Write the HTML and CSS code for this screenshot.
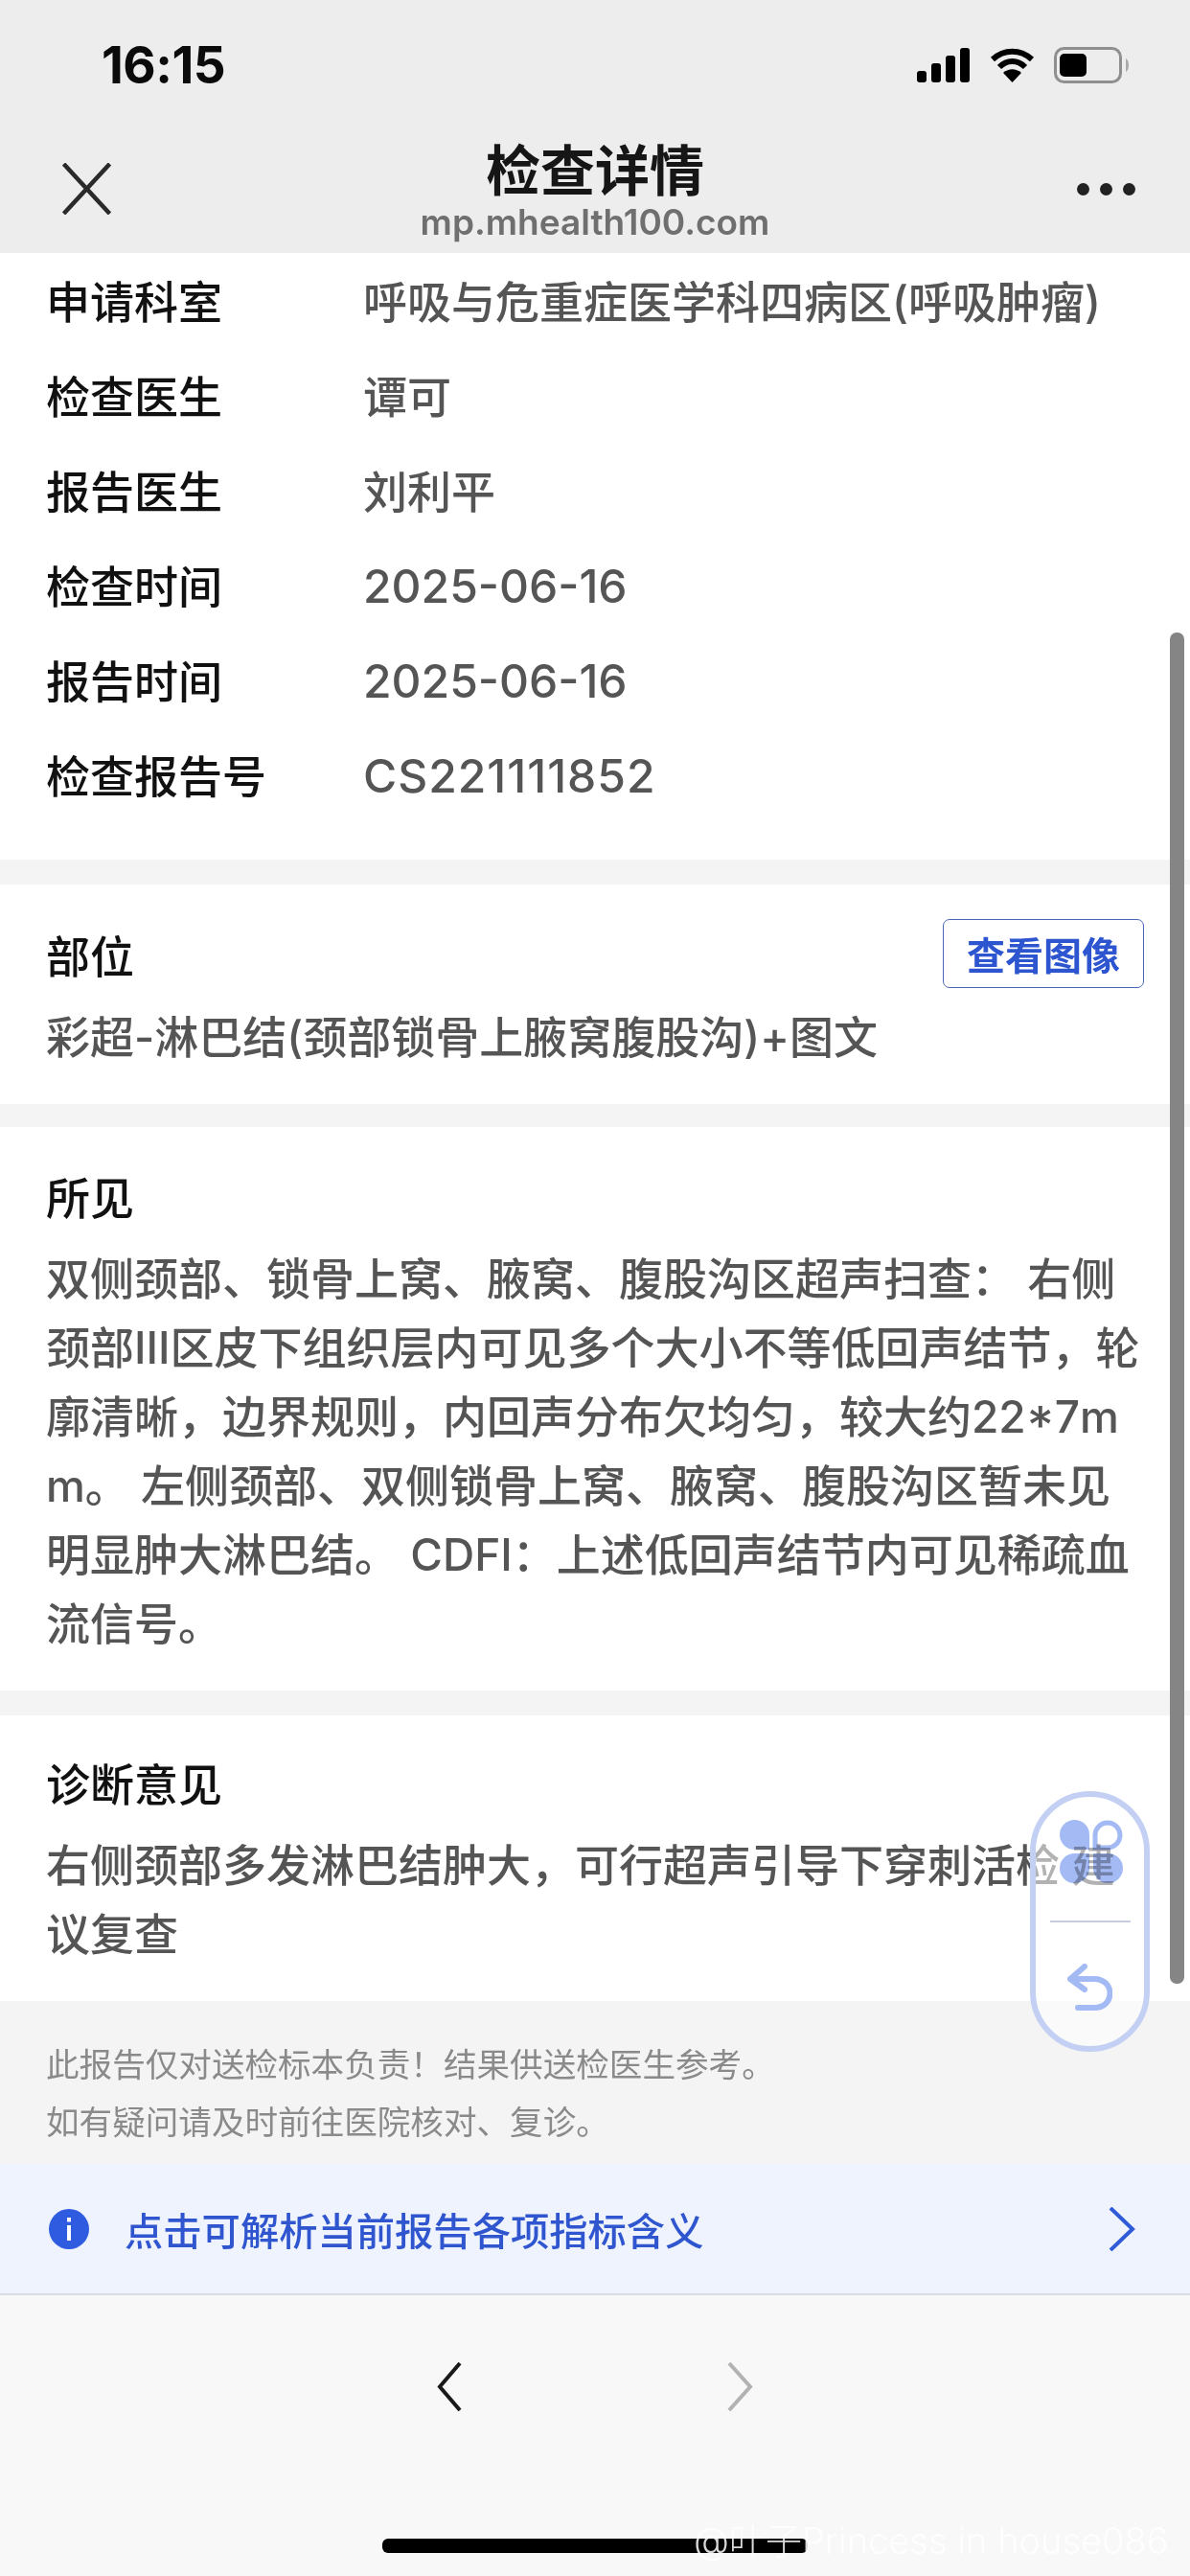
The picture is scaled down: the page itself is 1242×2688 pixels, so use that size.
FILE: index.html
```html
<!DOCTYPE html>
<html lang="zh-CN">
<head>
<meta charset="utf-8">
<title>检查详情</title>
<link rel="stylesheet" href="styles.css">
</head>
<body>
<div class="page">
  <header class="top">
    <div class="status">
      <span class="time">16:15</span>
      <div class="status-icons">
        <svg class="signal" width="56" height="36" viewBox="0 0 56 36"><rect x="0" y="24" width="10" height="12" rx="3"/><rect x="15" y="16" width="10" height="20" rx="3"/><rect x="30" y="8" width="10" height="28" rx="3"/><rect x="45" y="0" width="10" height="36" rx="3"/></svg>
        <svg class="wifi" width="47" height="36" viewBox="0 0 47 36"><path d="M3 12 C15 1 32 1 44 12" fill="none" stroke="#000" stroke-width="6"/><path d="M10 20 C18 12 29 12 37 20" fill="none" stroke="#000" stroke-width="6"/><path d="M23.5 36 L14 26 C20 21 27 21 33 26 Z"/></svg>
        <svg class="battery" width="79" height="38" viewBox="0 0 79 38"><rect x="1.5" y="1.5" width="68" height="35" rx="9" fill="none" stroke="#8f8f8f" stroke-width="3"/><rect x="6" y="7" width="28" height="24" rx="5" fill="#000"/><path d="M75 12 C79 14 79 24 75 26 Z" fill="#aaa"/></svg>
      </div>
    </div>
    <div class="nav">
      <svg class="close" width="51" height="54" viewBox="0 0 51 54"><path d="M1.5 1 L49.5 53 M49.5 1 L1.5 53" fill="none" stroke="#2a2a2a" stroke-width="4.5"/></svg>
      <div class="titles">
        <div class="title">检查详情</div>
        <div class="domain">mp.mhealth100.com</div>
      </div>
      <div class="dots"><i></i><i></i><i></i></div>
    </div>
  </header>

  <main class="content">
    <section class="card info">
      <div class="row"><span class="label">申请科室</span><span class="value value-cjk">呼吸与危重症医学科四病区(呼吸肿瘤)</span></div>
      <div class="row"><span class="label">检查医生</span><span class="value value-cjk">谭可</span></div>
      <div class="row"><span class="label">报告医生</span><span class="value value-cjk">刘利平</span></div>
      <div class="row"><span class="label">检查时间</span><span class="value value-latin">2025-06-16</span></div>
      <div class="row"><span class="label">报告时间</span><span class="value value-latin">2025-06-16</span></div>
      <div class="row"><span class="label">检查报告号</span><span class="value value-latin value-code">CS221111852</span></div>
    </section>

    <section class="card part">
      <div class="part-head"><h2 class="heading">部位</h2><span class="view-btn">查看图像</span></div>
      <p class="text">彩超-淋巴结(颈部锁骨上腋窝腹股沟)+图文</p>
    </section>

    <section class="card finding">
      <h2 class="heading">所见</h2>
      <p class="text">双侧颈部、锁骨上窝、腋窝、腹股沟区超声扫查： 右侧颈部III区皮下组织层内可见多个大小不等低回声结节，轮廓清晰，边界规则，内回声分布欠均匀，较大约22*7mm。 左侧颈部、双侧锁骨上窝、腋窝、腹股沟区暂未见明显肿大淋巴结。 CDFI：上述低回声结节内可见稀疏血流信号。</p>
    </section>

    <section class="card diagnosis">
      <h2 class="heading">诊断意见</h2>
      <p class="text">右侧颈部多发淋巴结肿大，可行超声引导下穿刺活检 建议复查</p>
    </section>

    <div class="notice">
      <p>此报告仅对送检标本负责！结果供送检医生参考。</p>
      <p>如有疑问请及时前往医院核对、复诊。</p>
    </div>

    <div class="banner">
      <svg class="info-icon" width="42" height="42" viewBox="0 0 42 42"><circle cx="21" cy="21" r="21" fill="#2f5be0"/><rect x="19" y="17" width="4" height="16" fill="#fff"/><rect x="19" y="9" width="4" height="4.5" fill="#fff"/></svg>
      <span class="banner-text">点击可解析当前报告各项指标含义</span>
      <svg class="banner-arrow" width="28" height="46" viewBox="0 0 28 46"><path d="M2 1 L25 23 L2 45" fill="none" stroke="#2f5bd8" stroke-width="4"/></svg>
    </div>
  </main>

  <footer class="bottom">
    <div class="pager">
      <svg width="26" height="51" viewBox="0 0 26 51"><path d="M24 1 L3 25.5 L24 50" fill="none" stroke="#1a1a1a" stroke-width="4"/></svg>
      <svg width="27" height="51" viewBox="0 0 27 51"><path d="M2 1 L24 25.5 L2 50" fill="none" stroke="#b2b2b2" stroke-width="4"/></svg>
    </div>
    <div class="home-bar"></div>
  </footer>

  <div class="scrollbar"></div>

  <div class="float-tool">
    <svg class="clover" width="66" height="66" viewBox="0 0 66 66"><path d="M31 31 H15.5 A15.5 15.5 0 1 1 31 15.5 Z" fill="#a3baf4"/><path d="M37 29 V15.5 A13 13 0 1 1 50 29 Z" fill="none" stroke="#a3baf4" stroke-width="5"/><path d="M31 35 V50.5 A15.5 15.5 0 1 1 15.5 35 Z" fill="#a3baf4"/><path d="M35 35 H50.5 A15.5 15.5 0 1 1 35 50.5 Z" fill="#a3baf4"/></svg>
    <div class="float-line"></div>
    <svg class="undo" width="47" height="49" viewBox="0 0 47 49"><path d="M18 3 L3 16 L18 27 M3 16 L28 16 C50 16 50 46 28 46 L11 46" fill="none" stroke="#a3baf4" stroke-width="6" stroke-linecap="round" stroke-linejoin="round"/></svg>
  </div>

  <div class="watermark">@叶子Princess in house086</div>
</div>
</body>
</html>
```

FILE: styles.css
```css
* { box-sizing: border-box; margin: 0; padding: 0; }
html, body { width: 1242px; height: 2688px; overflow: hidden; background: #f8f8f8; }
body { font-family: "Inter", "Noto Sans CJK SC", sans-serif; }
.page { position: relative; width: 1242px; height: 2688px; display: flex; flex-direction: column; overflow: hidden; }

.top { height: 264px; background: #ededed; flex: none; display: flex; flex-direction: column; }
.status { height: 132px; padding: 48px 63px 0 106px; display: flex; justify-content: space-between; align-items: flex-start; }
.time { font-size: 53px; line-height: 40px; font-weight: 700; color: #0b0b0b; letter-spacing: -0.5px; }
.status-icons { display: flex; align-items: center; gap: 20px; margin-top: 1px; }
.nav { flex: 1; position: relative; display: flex; justify-content: center; }
.close { position: absolute; left: 65px; top: 38px; }
.titles { text-align: center; margin-top: 10px; }
.title { font-size: 57px; line-height: 64px; font-weight: 700; color: #161616; font-family: "Noto Sans CJK SC", sans-serif; }
.domain { font-size: 37px; line-height: 44px; font-weight: 600; color: #6f6f6f; margin-top: 4px; }
.dots { position: absolute; right: 57px; top: 59px; display: flex; gap: 11px; }
.dots i { display: block; width: 13px; height: 13px; border-radius: 50%; background: #222; }

.content { flex: none; display: flex; flex-direction: column; background: #f4f4f4; }
.card { background: #fff; padding-left: 48px; padding-right: 46px; }
.info { height: 633px; margin-bottom: 26px; }
.row { height: 99px; display: flex; align-items: center; }
.label { width: 331px; flex: none; font-size: 46px; font-weight: 500; color: #111; padding-bottom: 4px; font-family: "Noto Sans CJK SC", sans-serif; }
.value { font-size: 46px; font-weight: 500; color: #555; white-space: nowrap; }
.value-cjk { padding-bottom: 3px; }
.value-latin { font-size: 48px; padding-top: 2px; }
.value-code { letter-spacing: 1px; }

.heading { font-size: 46px; line-height: 60px; font-weight: 500; color: #111; font-family: "Noto Sans CJK SC", sans-serif; }
.text { font-size: 46px; line-height: 72px; font-weight: 500; color: #555; word-break: break-all; }
.part { height: 229px; padding-top: 42px; margin-bottom: 24px; }
.part-head { display: flex; justify-content: space-between; align-items: flex-start; height: 81px; padding-right: 2px; }
.view-btn { margin-top: -6px; width: 210px; height: 72px; border: 1.5px solid #4a68b8; border-radius: 7px; display: flex; align-items: center; justify-content: center; font-size: 40px; font-weight: 700; color: #2c55cf; font-family: "Noto Sans CJK SC", sans-serif; }
.finding { height: 588px; padding-top: 41px; margin-bottom: 26px; }
.finding .heading { margin-bottom: 21px; }
.diagnosis { height: 298px; padding-top: 39px; }
.diagnosis .heading { margin-bottom: 21px; }

.notice { height: 170px; padding: 36px 48px 0; font-size: 34.6px; line-height: 60px; color: #8a8a8a; font-weight: 400; }
.banner { height: 137px; background: #eef3fe; border-bottom: 2px solid #d9dce4; display: flex; align-items: center; padding: 0 57px 0 51px; }
.banner-text { font-size: 40.3px; font-weight: 500; color: #2f55cf; margin-left: 37px; flex: 1; font-family: "Noto Sans CJK SC", sans-serif; }
.info-icon, .banner-arrow { flex: none; }

.bottom { flex: 1; background: #f8f8f8; position: relative; }
.pager { display: flex; justify-content: center; gap: 277px; padding: 70px 0 0; margin-left: 0; }
.home-bar { position: absolute; left: 399px; top: 254px; width: 444px; height: 15px; background: #000; border-radius: 6px; }

.scrollbar { position: absolute; left: 1221px; top: 660px; width: 15px; height: 1410px; border-radius: 7px; background: #858585; }

.float-tool { position: absolute; left: 1075px; top: 1869px; width: 125px; height: 272px; border: 6px solid #c3d0f4; border-radius: 63px; background: rgba(255,255,255,.55); display: flex; flex-direction: column; align-items: center; }
.clover { margin-top: 24px; flex: none; margin-left: 2px; mix-blend-mode: multiply; }
.float-line { width: 84px; height: 2px; background: #c6cde0; margin-top: 39px; flex: none; }
.undo { margin-top: 43px; flex: none; }

.watermark { position: absolute; left: 724px; top: 2628px; font-size: 38px; line-height: 46px; font-weight: 300; color: rgba(255,255,255,.85); white-space: nowrap; }
```
